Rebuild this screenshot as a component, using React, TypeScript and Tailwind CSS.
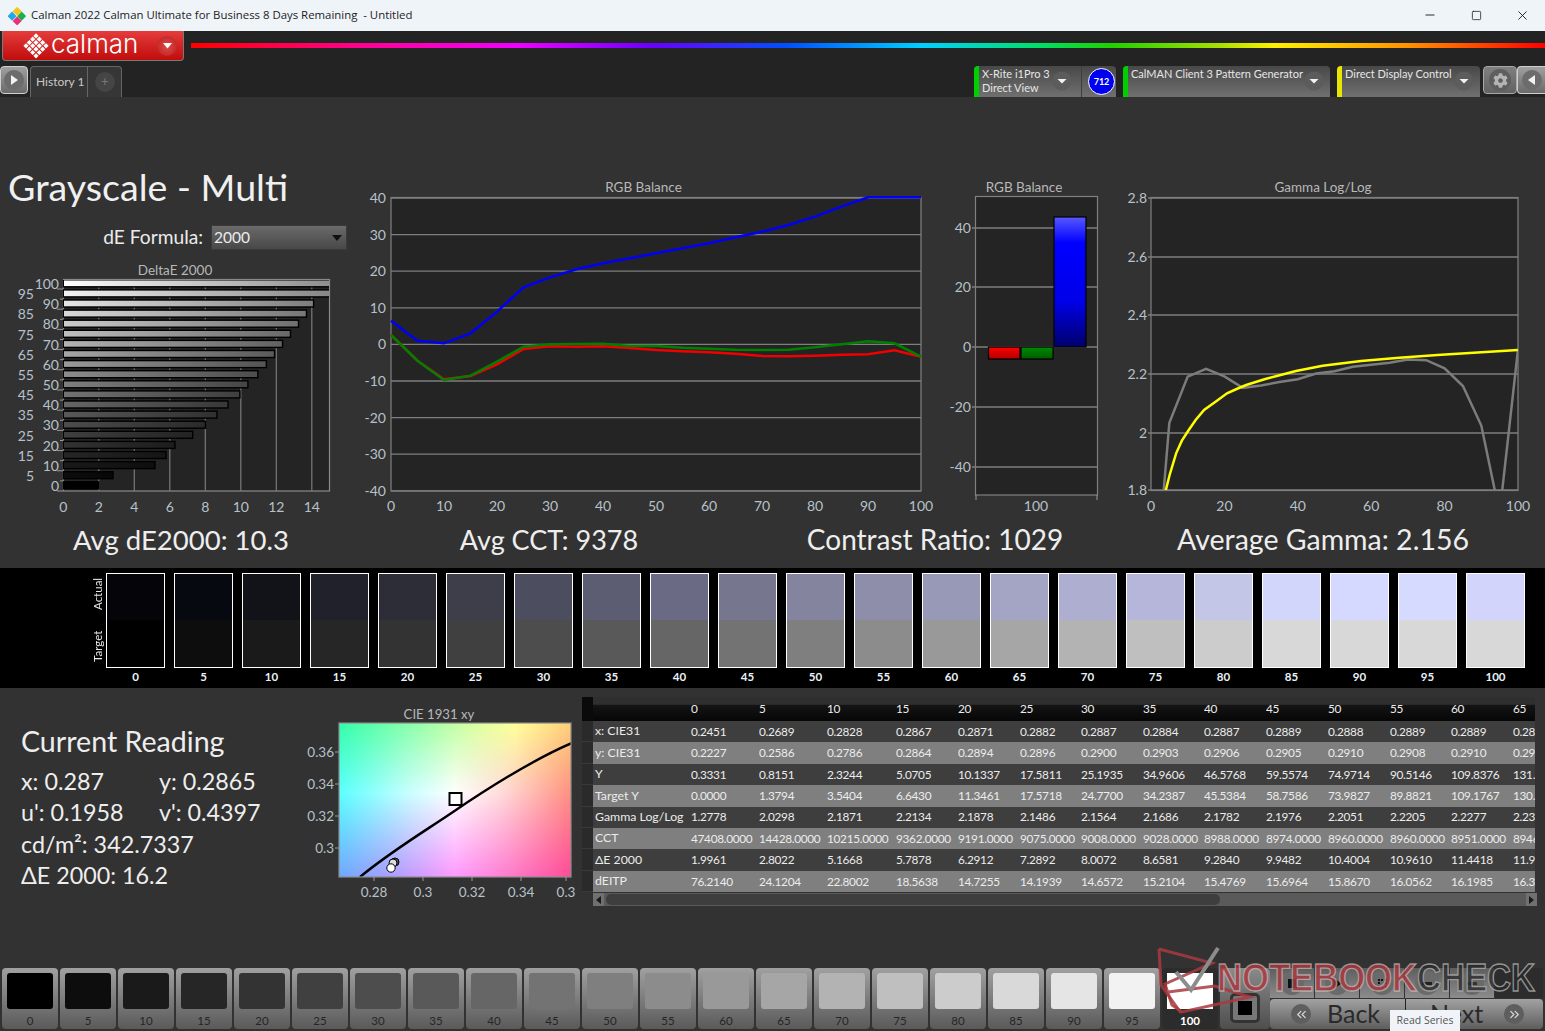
import { ChevronsLeft, ChevronsRight, Minus, Square, X } from 'lucide-react';
import { FaCog } from 'react-icons/fa';

const levels = Array.from({ length: 21 }, (_, i) => i * 5);
const gray = (v: number) => `rgb(${v},${v},${v})`;

const actualColors = [
  '#040409', '#070910', '#111318', '#20212a', '#2d2d38', '#3e3e4b', '#4d4d60', '#5c5c72', '#6a6a84', '#76768f', '#84849e',
  '#8e8eaa', '#9898b7', '#a4a4c4', '#aeaed0', '#b6b6da', '#c4c6e8', '#d2d6fa', '#d5d9ff', '#d6dafe', '#d3d4fb',
];

const deltaE = [
  1.9961, 2.8022, 5.1668, 5.7878, 6.2912, 7.2892, 8.0072, 8.6581, 9.284, 9.9482, 10.4004, 10.961, 11.4418, 11.9, 12.35, 12.8,
  13.25, 13.7, 14.1, 15.3, 15.3,
];

const tableHead = ['', '0', '5', '10', '15', '20', '25', '30', '35', '40', '45', '50', '55', '60', '65'];
const tableRows = [
  ['x: CIE31', '0.2451', '0.2689', '0.2828', '0.2867', '0.2871', '0.2882', '0.2887', '0.2884', '0.2887', '0.2889', '0.2888', '0.2889', '0.2889', '0.2889'],
  ['y: CIE31', '0.2227', '0.2586', '0.2786', '0.2864', '0.2894', '0.2896', '0.2900', '0.2903', '0.2906', '0.2905', '0.2910', '0.2908', '0.2910', '0.2911'],
  ['Y', '0.3331', '0.8151', '2.3244', '5.0705', '10.1337', '17.5811', '25.1935', '34.9606', '46.5768', '59.5574', '74.9714', '90.5146', '109.8376', '131.2044'],
  ['Target Y', '0.0000', '1.3794', '3.5404', '6.6430', '11.3461', '17.5718', '24.7700', '34.2387', '45.5384', '58.7586', '73.9827', '89.8821', '109.1767', '130.5511'],
  ['Gamma Log/Log', '1.2778', '2.0298', '2.1871', '2.2134', '2.1878', '2.1486', '2.1564', '2.1686', '2.1782', '2.1976', '2.2051', '2.2205', '2.2277', '2.2341'],
  ['CCT', '47408.0000', '14428.0000', '10215.0000', '9362.0000', '9191.0000', '9075.0000', '9008.0000', '9028.0000', '8988.0000', '8974.0000', '8960.0000', '8960.0000', '8951.0000', '8946.0000'],
  ['ΔE 2000', '1.9961', '2.8022', '5.1668', '5.7878', '6.2912', '7.2892', '8.0072', '8.6581', '9.2840', '9.9482', '10.4004', '10.9610', '11.4418', '11.9083'],
  ['dEITP', '76.2140', '24.1204', '22.8002', '18.5638', '14.7255', '14.1939', '14.6572', '15.2104', '15.4769', '15.6964', '15.8670', '16.0562', '16.1985', '16.3225'],
];
const tableGrid = 'grid grid-cols-[98px_68px_68px_69px_62px_62px_61px_62px_61px_62px_62px_62px_61px_62px_22px]';

const labelFill = '#b7c1ca';
const titleSize = 13.5;

function DropCircle({ size = 20 }: { size?: number }) {
  return (
    <svg width={size} height={size} viewBox="0 0 20 20" className="shrink-0">
      <circle cx="10" cy="10" r="9.5" fill="#5c5c5c" />
      <path d="M5.5 8 H14.5 L10 12.5 Z" fill="#f4f4f4" />
    </svg>
  );
}

function DeviceWidget({ color, width, lines, badge }: { color: string; width: string; lines: string[]; badge?: boolean }) {
  return (
    <div className={`${width} h-[31px] flex rounded-t-[4px] overflow-hidden bg-[linear-gradient(#484848,#707070)]`}>
      <div className={`w-[5px] shrink-0 ${color}`} />
      <div className="flex-1 pl-[3px] pt-px text-[11px] leading-[14px] text-[#e6e6e6] whitespace-nowrap">
        {lines.map((l) => (
          <div key={l}>{l}</div>
        ))}
      </div>
      <div className={`pt-[5px] ${badge ? 'pr-[9px]' : 'pr-[6px]'}`}>
        <DropCircle />
      </div>
      {badge && (
        <div className="w-[35px] shrink-0 border-l border-[#3e3e3e] flex items-center justify-end pr-px">
          <div className="w-[27px] h-[27px] rounded-full bg-[#0000f0] border border-white flex items-center justify-center text-[9px] font-bold text-white">
            712
          </div>
        </div>
      )}
    </div>
  );
}

function TitleBar() {
  return (
    <div className="h-[31px] bg-[#eff4f9] flex items-center shrink-0">
      <svg width="18" height="18" viewBox="0 0 18 18" className="ml-[8px]">
        <rect x="6" y="1" width="6.4" height="6.4" transform="rotate(45 9 4.2)" fill="#f5c518" />
        <rect x="1" y="6" width="6.4" height="6.4" transform="rotate(45 4.2 9)" fill="#22a7e8" />
        <rect x="10.6" y="6" width="6.4" height="6.4" transform="rotate(45 13.8 9)" fill="#1fae4b" />
        <rect x="6" y="10.6" width="6.4" height="6.4" transform="rotate(45 9 13.8)" fill="#ec2f7b" />
      </svg>
      <span className="ml-[5px] -mt-px font-['Open_Sans',sans-serif] text-[11.4px] text-[#1c1c1c] whitespace-pre">
        Calman 2022 Calman Ultimate for Business 8 Days Remaining  - Untitled
      </span>
      <div className="ml-auto flex text-[#111]">
        <div className="w-[46px] flex justify-center"><Minus size={14} strokeWidth={1.5} /></div>
        <div className="w-[46px] flex justify-center"><Square size={11} strokeWidth={1.6} className="my-[1.5px]" /></div>
        <div className="w-[46px] flex justify-center"><X size={15} strokeWidth={1.4} /></div>
      </div>
    </div>
  );
}

function Logo() {
  const cells = [0, 1, 2, 3].flatMap((a) => [0, 1, 2, 3].map((b) => [a, b]));
  return (
    <div className="w-[182px] h-[30px] rounded-b-[4px] border border-t-0 border-[#7a7a7a] bg-[linear-gradient(#e63c3c,#c00c0c)] flex items-center">
      <svg width="26" height="26" viewBox="-13 -13 26 26" className="ml-[20px]">
        <g transform="rotate(45)">
          {cells.map(([a, b]) => (
            <rect key={`${a}${b}`} x={-9 + a * 4.7} y={-9 + b * 4.7} width="3.7" height="3.7" fill="#fff" />
          ))}
        </g>
      </svg>
      <span className="ml-[2px] font-['Inter',sans-serif] font-light text-[26px] leading-[30px] text-white -mt-[3px]">calman</span>
      <div className="ml-auto mr-[6px] w-[20px] h-[20px] rounded-full bg-[radial-gradient(#e04a4a,#b81c1c)] flex items-center justify-center">
        <svg width="9" height="6" viewBox="0 0 9 6"><path d="M0 0 H9 L4.5 5.5 Z" fill="#fff" /></svg>
      </div>
    </div>
  );
}

function Toolbar() {
  return (
    <div className="h-[66px] bg-[#232323] shrink-0 flex flex-col">
      <div className="h-[35px] pl-[2px] flex items-start">
        <Logo />
        <div className="ml-[7px] mt-[12px] h-[5px] flex-1 bg-[linear-gradient(90deg,#ff0000_0%,#ff00a0_14%,#f000ff_24%,#6a00ff_34%,#0050ff_44%,#00d0ff_54%,#00e060_63%,#20d000_68%,#a8e000_76%,#fff000_80%,#ff9000_90%,#ff0000_100%)]" />
      </div>
      <div className="h-[31px] flex">
        <div className="w-[28px] h-[28px] rounded-[4px] border border-[#cfcfcf] bg-[linear-gradient(#a0a0a0,#6a6a6a)] flex items-center justify-center">
          <div className="w-[20px] h-[20px] rounded-full bg-[#6c6c6c] flex items-center justify-center">
            <svg width="7" height="10" viewBox="0 0 7 10"><path d="M0 0 L7 5 L0 10 Z" fill="#f2f2f2" /></svg>
          </div>
        </div>
        <div className="ml-[2px] w-[92px] h-[31px] rounded-t-[4px] border border-b-0 border-[#666] bg-[#363636] flex items-center text-[12px] text-[#c8c8c8]">
          <span className="w-[57px] pl-[5px] whitespace-nowrap">History 1</span>
          <div className="w-[34px] h-full border-l border-[#666] flex items-center justify-center">
            <div className="w-[20px] h-[20px] rounded-full bg-[#454545] flex items-center justify-center text-[13px] text-[#777]">+</div>
          </div>
        </div>
        <div className="ml-auto flex">
          <DeviceWidget color="bg-[#00d000]" width="w-[142px]" lines={['X-Rite i1Pro 3', 'Direct View']} badge />
          <div className="w-[7px]" />
          <DeviceWidget color="bg-[#00d000]" width="w-[207px]" lines={['CalMAN Client 3 Pattern Generator']} />
          <div className="w-[7px]" />
          <DeviceWidget color="bg-[#e6e600]" width="w-[143px]" lines={['Direct Display Control']} />
          <div className="w-[3px]" />
          <div className="w-[34px] h-[28px] rounded-[4px] border border-[#a8a8a8] bg-[linear-gradient(#808080,#626262)] flex items-center justify-center">
            <div className="w-[22px] h-[22px] rounded-full bg-[#5e5e5e] flex items-center justify-center">
              <FaCog size={15} className="text-[#b4b4b4]" />
            </div>
          </div>
          <div className="w-[28px] h-[28px] rounded-l-[4px] border border-r-0 border-[#cfcfcf] bg-[linear-gradient(#a0a0a0,#6a6a6a)] flex items-center justify-center">
            <div className="w-[20px] h-[20px] rounded-full bg-[#6c6c6c] flex items-center justify-center">
              <svg width="7" height="10" viewBox="0 0 7 10"><path d="M7 0 L0 5 L7 10 Z" fill="#f2f2f2" /></svg>
            </div>
          </div>
        </div>
      </div>
    </div>
  );
}

function DeltaEChart() {
  const x0 = 63.3;
  const sx = 17.75;
  return (
    <svg width="362" height="262" viewBox="0 258 362 262">
      <defs>
        {levels.map((v, i) => {
          const c = Math.round(v * 2.55);
          return (
            <linearGradient key={v} id={`de${i}`} x1="0" x2="1" y1="0" y2="0">
              <stop offset="0" stopColor={gray(c)} />
              <stop offset="1" stopColor={gray(Math.round(c * 0.55))} />
            </linearGradient>
          );
        })}
        <clipPath id="deClip"><rect x="63" y="279" width="266" height="211" /></clipPath>
      </defs>
      <text x="175" y="274" textAnchor="middle" fontSize={titleSize} fill="#b8b8b8">DeltaE 2000</text>
      <rect x="63.5" y="278.5" width="266" height="211.5" fill="#242424" stroke="#8a8a8a" strokeWidth="1.2" />
      {[2, 4, 6, 8, 10, 12, 14].map((t) => (
        <line key={t} x1={x0 + t * sx} x2={x0 + t * sx} y1="279" y2="490" stroke="#7a7a7a" strokeWidth="1.2" />
      ))}
      <g clipPath="url(#deClip)">
        {levels.map((v, i) => (
          <rect
            key={v}
            x={x0}
            y={484.3 - i * 10.1 - 3.5}
            width={deltaE[i] * sx}
            height="7"
            fill={`url(#de${i})`}
            stroke="#000"
            strokeWidth="1.4"
          />
        ))}
      </g>
      {levels.map((v, i) => (
        <g key={v}>
          <text x={i % 2 === 0 ? 59 : 34} y={490 - i * 10.1} textAnchor="end" fontSize="14" fill={labelFill}>{v}</text>
          <line x1={i % 2 === 0 ? 57 : 60} x2="63" y1={490 - i * 10.1} y2={490 - i * 10.1} stroke="#9a9a9a" />
        </g>
      ))}
      {[0, 2, 4, 6, 8, 10, 12, 14].map((t) => (
        <text key={t} x={x0 + t * sx} y="511" textAnchor="middle" fontSize="14" fill={labelFill}>{t}</text>
      ))}
    </svg>
  );
}

function BalanceChart() {
  const toY = (z: number) => 190 + z / 3;
  const line = (zs: number[], step: number) => zs.map((z, i) => `${391 + i * step},${toY(z)}`).join(' ');
  const blue = [392, 452, 460, 430, 365, 292, 262, 238, 220, 205, 190, 175, 160, 142, 125, 105, 80, 50, 22];
  const green = [435, 512, 570, 557, 515, 470, 463, 462, 461, 468, 468, 473, 476, 479, 480, 479, 472, 463, 454, 460, 500];
  const red = [435, 512, 568, 558, 523, 477, 469, 470, 469, 474, 480, 484, 487, 491, 498, 499, 497, 494, 493, 481, 500];
  const yTicks = [40, 30, 20, 10, 0, -10, -20, -30, -40];
  return (
    <svg width="572" height="423" viewBox="362 97 572 423">
      <text x="643.5" y="192" textAnchor="middle" fontSize={titleSize} fill="#b8b8b8">RGB Balance</text>
      <rect x="391" y="197.5" width="530" height="293.5" fill="#242424" stroke="#808080" strokeWidth="1.2" />
      {yTicks.map((t, i) => {
        const y = 198 + i * 36.6;
        return (
          <g key={t}>
            <line x1="391" x2="921" y1={y} y2={y} stroke="#7e7e7e" strokeWidth="1.3" />
            <text x="386" y={y + 5} textAnchor="end" fontSize="14" fill={labelFill}>{t}</text>
          </g>
        );
      })}
      <polyline points={`${line(blue, 26.5)} 921,${toY(22)}`} fill="none" stroke="#0000f5" strokeWidth="2.5" />
      <polyline points={line(red, 26.5)} fill="none" stroke="#f00000" strokeWidth="2.5" />
      <polyline points={line(green, 26.5)} fill="none" stroke="#008000" strokeWidth="2.5" />
      {[0, 10, 20, 30, 40, 50, 60, 70, 80, 90, 100].map((t) => (
        <text key={t} x={391 + t * 5.3} y="511" textAnchor="middle" fontSize="14" fill={labelFill}>{t}</text>
      ))}
    </svg>
  );
}

function BarChart() {
  const ticks: [number, number][] = [[40, 228], [20, 287], [0, 347], [-20, 407], [-40, 467]];
  return (
    <svg width="176" height="423" viewBox="934 97 176 423">
      <defs>
        <linearGradient id="barB" x1="0" x2="0" y1="0" y2="1">
          <stop offset="0" stopColor="#5858ff" />
          <stop offset="0.2" stopColor="#0000ff" />
          <stop offset="0.65" stopColor="#0000e8" />
          <stop offset="1" stopColor="#00006a" />
        </linearGradient>
        <linearGradient id="barR" x1="0" x2="0" y1="0" y2="1">
          <stop offset="0" stopColor="#ff0000" />
          <stop offset="1" stopColor="#b00000" />
        </linearGradient>
        <linearGradient id="barG" x1="0" x2="0" y1="0" y2="1">
          <stop offset="0" stopColor="#008a00" />
          <stop offset="1" stopColor="#005c00" />
        </linearGradient>
      </defs>
      <text x="1024" y="192" textAnchor="middle" fontSize={titleSize} fill="#b8b8b8">RGB Balance</text>
      <rect x="975.5" y="196.5" width="122" height="298.5" fill="#242424" stroke="#808080" strokeWidth="1.2" />
      {ticks.map(([t, y]) => (
        <g key={t}>
          <line x1="972" x2="1097" y1={y} y2={y} stroke="#7e7e7e" strokeWidth="1.3" />
          <text x="971" y={y + 5} textAnchor="end" fontSize="14" fill={labelFill}>{t}</text>
        </g>
      ))}
      <rect x="988.5" y="347" width="31.5" height="12" fill="url(#barR)" stroke="#000" strokeWidth="1.2" />
      <rect x="1021" y="347" width="32" height="12" fill="url(#barG)" stroke="#000" strokeWidth="1.2" />
      <rect x="1054" y="217" width="32" height="130" fill="url(#barB)" stroke="#000" strokeWidth="1.2" />
      <line x1="976" x2="976" y1="495" y2="500" stroke="#9a9a9a" />
      <line x1="1097" x2="1097" y1="495" y2="500" stroke="#9a9a9a" />
      <text x="1036" y="511" textAnchor="middle" fontSize="14" fill={labelFill}>100</text>
    </svg>
  );
}

function GammaChart() {
  const toX = (v: number) => 1151 + v * 3.67;
  const toY = (g: number) => 490 - (g - 1.8) * 293;
  const measured = [
    1.2778, 2.0298, 2.1871, 2.2134, 2.1878, 2.1486, 2.1564, 2.1686, 2.1782, 2.1976, 2.2051, 2.2205, 2.2277, 2.2341, 2.245, 2.243, 2.215,
    2.155, 2.02, 1.72, 2.28,
  ];
  const gray2 = measured.map((g, i) => `${toX(i * 5)},${toY(g)}`).join(' ');
  const yellowZ = [
    [590, 946], [600, 900], [617, 835], [632, 797], [650, 765], [668, 735], [690, 705], [720, 680], [750, 655], [775, 642], [800, 630],
    [850, 612], [890, 600], [930, 588], [1000, 572], [1100, 558], [1200, 548], [1300, 540], [1510, 525],
  ];
  const yellow = yellowZ.map(([x, y]) => `${940 + x / 2.613},${175 + y / 3}`).join(' ');
  const yTicks: [string, number][] = [['2.8', 198], ['2.6', 257], ['2.4', 315], ['2.2', 374], ['2', 433], ['1.8', 490]];
  return (
    <svg width="435" height="423" viewBox="1110 97 435 423">
      <defs>
        <clipPath id="gammaClip"><rect x="1151" y="197" width="367" height="293" /></clipPath>
      </defs>
      <text x="1323" y="192" textAnchor="middle" fontSize={titleSize} fill="#b8b8b8">Gamma Log/Log</text>
      <rect x="1151" y="197.5" width="367" height="293" fill="#242424" stroke="#808080" strokeWidth="1.2" />
      {yTicks.map(([t, y]) => (
        <g key={t}>
          <line x1="1148" x2="1518" y1={y} y2={y} stroke="#7e7e7e" strokeWidth="1.3" />
          <text x="1147" y={y + 5} textAnchor="end" fontSize="14" fill={labelFill}>{t}</text>
        </g>
      ))}
      <g clipPath="url(#gammaClip)">
        <polyline points={gray2} fill="none" stroke="#7c7c7c" strokeWidth="2.5" />
        <polyline points={yellow} fill="none" stroke="#ffff00" strokeWidth="2.5" />
      </g>
      {[0, 20, 40, 60, 80, 100].map((t) => (
        <text key={t} x={toX(t)} y="511" textAnchor="middle" fontSize="14" fill={labelFill}>{t}</text>
      ))}
    </svg>
  );
}

function ChartsSection() {
  return (
    <div className="h-[423px] flex shrink-0">
      <div className="w-[362px] shrink-0 flex flex-col">
        <h1 className="mt-[68px] ml-[8px] h-[44px] text-[37.6px] leading-[44px] text-[#f0f0f0] font-normal whitespace-nowrap">Grayscale - Multi</h1>
        <div className="mt-[16px] h-[25px] flex items-center">
          <div className="w-[203px] -mt-px text-right text-[19.2px] text-[#ececec]">dE Formula:</div>
          <div className="ml-[8px] w-[136px] h-[25px] border border-[#3a3a3a] bg-[linear-gradient(#6a6a6a,#484848)] flex items-center pl-[2px] pr-[4px] text-[15.5px] text-[#ececec]">
            2000
            <svg width="10" height="6" viewBox="0 0 10 6" className="ml-auto"><path d="M0 0 H10 L5 6 Z" fill="#101010" /></svg>
          </div>
        </div>
        <div className="mt-[9px]"><DeltaEChart /></div>
      </div>
      <BalanceChart />
      <BarChart />
      <GammaChart />
    </div>
  );
}

function StatsRow() {
  return (
    <div className="h-[48px] shrink-0 grid grid-cols-[362px_374px_398px_378px] items-baseline text-center text-[#eeeeee] whitespace-nowrap">
      <div className="text-[27.5px] leading-[38px]">Avg dE2000: 10.3</div>
      <div className="text-[27px] leading-[38px]">Avg CCT: 9378</div>
      <div className="text-[28px] leading-[38px]">Contrast Ratio: 1029</div>
      <div className="text-[28.5px] leading-[38px]">Average Gamma: 2.156</div>
    </div>
  );
}

function SwatchStrip() {
  return (
    <div className="h-[120px] bg-black shrink-0 flex pt-[5px]">
      <div className="w-[92px] shrink-0" />
      <div className="w-[14px] h-[95px] shrink-0 flex flex-col text-[11.5px] leading-[12px] text-[#e6e6e6]">
        <div className="h-[37px] w-[12px] [writing-mode:vertical-rl] rotate-180">Actual</div>
        <div className="mt-[15px] h-[37px] w-[12px] [writing-mode:vertical-rl] rotate-180">Target</div>
      </div>
      <div className="flex gap-[9px]">
        {levels.map((v, i) => (
          <div key={v} className="w-[59px]">
            <div className="h-[95px] border border-white flex flex-col">
              <div className="h-[46px]" style={{ background: actualColors[i] }} />
              <div className="flex-1" style={{ background: gray(Math.min(Math.round(v * 2.55), 216)) }} />
            </div>
            <div className="mt-[2px] text-center text-[11.5px] font-bold leading-[14px] text-[#eaf2f8]">{v}</div>
          </div>
        ))}
      </div>
    </div>
  );
}

function CurrentReading() {
  return (
    <div className="w-[300px] shrink-0 pl-[21px] pt-[33px] text-[#eeeeee]">
      <div className="text-[28.6px] leading-[40px]">Current Reading</div>
      <div className="mt-[5px] grid grid-cols-[138px_1fr] text-[23.3px] leading-[31.4px] whitespace-nowrap">
        <div>x: 0.287</div>
        <div>y: 0.2865</div>
        <div>u': 0.1958</div>
        <div>v': 0.4397</div>
        <div className="col-span-2">cd/m²: 342.7337</div>
        <div className="col-span-2">ΔE 2000: 16.2</div>
      </div>
    </div>
  );
}

function CieChart() {
  return (
    <svg width="282" height="277" viewBox="300 688 282 277" className="shrink-0">
      <defs>
        <linearGradient id="cieTop">
          <stop offset="0" stopColor="#33ffa8" />
          <stop offset="0.3" stopColor="#88ffaa" />
          <stop offset="0.6" stopColor="#ddffa0" />
          <stop offset="0.76" stopColor="#ffff99" />
          <stop offset="1" stopColor="#ffcf78" />
        </linearGradient>
        <linearGradient id="cieMid">
          <stop offset="0" stopColor="#5cffff" />
          <stop offset="0.3" stopColor="#c8ffff" />
          <stop offset="0.5" stopColor="#ffffff" />
          <stop offset="0.7" stopColor="#ffdcdc" />
          <stop offset="1" stopColor="#ff9080" />
        </linearGradient>
        <linearGradient id="cieBot">
          <stop offset="0" stopColor="#6ea8ff" />
          <stop offset="0.25" stopColor="#b39cff" />
          <stop offset="0.5" stopColor="#ff99ff" />
          <stop offset="0.75" stopColor="#ff78c8" />
          <stop offset="1" stopColor="#ff4a98" />
        </linearGradient>
        <linearGradient id="fadeDown" x1="0" x2="0" y1="0" y2="1">
          <stop offset="0" stopColor="#fff" />
          <stop offset="1" stopColor="#000" />
        </linearGradient>
        <linearGradient id="fadeUp" x1="0" x2="0" y1="1" y2="0">
          <stop offset="0" stopColor="#fff" />
          <stop offset="1" stopColor="#000" />
        </linearGradient>
        <mask id="maskTop" maskUnits="userSpaceOnUse" x="339" y="723" width="232" height="154">
          <rect x="339" y="723" width="232" height="70" fill="url(#fadeDown)" />
        </mask>
        <mask id="maskBot" maskUnits="userSpaceOnUse" x="339" y="723" width="232" height="154">
          <rect x="339" y="793" width="232" height="84" fill="url(#fadeUp)" />
        </mask>
        <clipPath id="cieClip"><rect x="339" y="723" width="232" height="154" /></clipPath>
      </defs>
      <text x="439" y="719" textAnchor="middle" fontSize="13.2" fill="#b8b8b8">CIE 1931 xy</text>
      <rect x="339" y="723" width="232" height="154" fill="url(#cieMid)" />
      <rect x="339" y="723" width="232" height="154" fill="url(#cieTop)" mask="url(#maskTop)" />
      <rect x="339" y="723" width="232" height="154" fill="url(#cieBot)" mask="url(#maskBot)" />
      <g clipPath="url(#cieClip)">
        <path d="M360 877 C390 852 425 831 453 812 S530 761 572 743" fill="none" stroke="#000" strokeWidth="2.4" />
        <rect x="449.5" y="793" width="12" height="12" fill="#fff" stroke="#000" strokeWidth="2" />
        <circle cx="395" cy="862" r="4" fill="#555" stroke="#000" />
        <circle cx="393" cy="863" r="4" fill="#ddd" stroke="#000" />
        <circle cx="391" cy="868" r="4.2" fill="#fff" stroke="#000" />
      </g>
      <rect x="339" y="723" width="232" height="154" fill="none" stroke="#8a8a8a" strokeWidth="1.2" />
      {([['0.36', 752], ['0.34', 784], ['0.32', 816], ['0.3', 848]] as [string, number][]).map(([t, y]) => (
        <g key={t}>
          <text x="334" y={y + 5} textAnchor="end" fontSize="13.5" fill={labelFill}>{t}</text>
          <line x1="335" x2="339" y1={y} y2={y} stroke="#9a9a9a" />
        </g>
      ))}
      {([['0.28', 374], ['0.3', 423], ['0.32', 472], ['0.34', 521], ['0.3', 566]] as [string, number][]).map(([t, x]) => (
        <g key={x}>
          <text x={x} y="897" textAnchor="middle" fontSize="13.5" fill={labelFill}>{t}</text>
          <line x1={x} x2={x} y1="877" y2="881" stroke="#9a9a9a" />
        </g>
      ))}
    </svg>
  );
}

function DataTable() {
  return (
    <div className="w-[955px] pt-[9px] text-[11.8px] tracking-[-0.3px] text-[#ececec]">
      <div className="flex h-[24px]">
        <div className="w-[11px] bg-[#0a0a0a]" />
        <div className={`${tableGrid} items-center bg-[linear-gradient(#2f2f2f_0%,#2f2f2f_30%,#141414_35%,#060606_100%)]`}>
          {tableHead.map((h, i) => (
            <div key={i} className="overflow-hidden">{h}</div>
          ))}
        </div>
      </div>
      {tableRows.map((row, r) => (
        <div key={row[0]} className="flex h-[21.4px]">
          <div className="w-[11px] bg-[#2a2a2a] border-b border-[#3a3a3a]" />
          <div className={`${tableGrid} items-center ${r % 2 === 0 ? 'bg-[#3e3e3e]' : 'bg-[#7f7f7f]'}`}>
            {row.map((c, i) => (
              <div key={i} className={`overflow-hidden whitespace-nowrap ${i === 0 ? 'pl-[2px] text-[12.3px] tracking-normal' : ''}`}>{c}</div>
            ))}
          </div>
        </div>
      ))}
      <div className="ml-[11px] mt-px w-[944px] h-[13px] bg-[#5a5a5a] flex items-center">
        <div className="w-[11px] h-[13px] bg-[#707070] flex items-center justify-center">
          <svg width="5" height="8" viewBox="0 0 5 8"><path d="M5 0 L0 4 L5 8 Z" fill="#1a1a1a" /></svg>
        </div>
        <div className="ml-[2px] w-[614px] h-[11px] rounded-[5px] bg-[#3e3e3e]" />
        <div className="ml-auto w-[11px] h-[13px] bg-[#707070] flex items-center justify-center">
          <svg width="5" height="8" viewBox="0 0 5 8"><path d="M0 0 L5 4 L0 8 Z" fill="#1a1a1a" /></svg>
        </div>
      </div>
    </div>
  );
}

function BottomStrip() {
  const small = [
    <div key="a" className="w-[9px] h-[9px] bg-[#111]" />,
    <svg key="b" width="9" height="11" viewBox="0 0 9 11"><path d="M0 0 L9 5.5 L0 11 Z" fill="#111" /></svg>,
    <div key="c" className="w-[9px] h-[9px] border-2 border-dotted border-[#111]" />,
    <div key="d" className="w-[10px] h-[3px] bg-[#222]" />,
    <div key="e" className="w-[10px] h-[3px] bg-[#333]" />,
  ];
  return (
    <div className="flex-1 flex pl-[2px] pt-[2px]">
      <div className="flex">
        {levels.slice(0, 20).map((v) => (
          <div key={v} className="w-[56px] mr-[2px] h-[61px] rounded-[4px] bg-[linear-gradient(#a0a0a0,#5a5a5a)] px-[5px] pt-[5px]">
            <div className="h-[36px] rounded-[3px]" style={{ background: gray(Math.round(v * 2.55)) }} />
            <div className="mt-[5px] text-center text-[11.5px] leading-[14px] text-[#262626]">{v}</div>
          </div>
        ))}
        <div className="w-[56px] mr-[2px] h-[61px] rounded-[4px] bg-[#2c2c2c] px-[5px] pt-[5px]">
          <div className="h-[36px] bg-white" />
          <div className="mt-[5px] text-center text-[11.5px] leading-[14px] font-bold text-white">100</div>
        </div>
      </div>
      <div className="w-[50px] h-[61px] rounded-[4px] bg-[linear-gradient(#8a8a8a,#4e4e4e)] flex items-end justify-center pb-[6px]">
        <div className="w-[30px] h-[30px] rounded-[5px] border-[3px] border-[#333] bg-[#777] flex items-center justify-center">
          <div className="w-[14px] h-[14px] bg-black" />
        </div>
      </div>
      <div className="w-[273px] flex flex-col">
        <div className="h-[30px] flex">
          {small.map((icon, i) => (
            <div key={i} className="w-[45px] border-r border-[#333] bg-[linear-gradient(#5e5e5e,#8c8c8c)] flex items-center justify-center">
              <div className="w-[24px] h-[24px] rounded-full bg-[#6a6a6a] flex items-center justify-center">{icon}</div>
            </div>
          ))}
          <div className="flex-1 bg-[#2c2c2c]" />
        </div>
        <div className="h-[31px] rounded-[4px] border-t border-[#333] flex bg-[linear-gradient(#a2a2a2,#5e5e5e)] text-[25px] text-[#2a2a2a]">
          <div className="w-[136px] border-r border-[#222] flex items-center pl-[21px]">
            <div className="w-[20px] h-[20px] rounded-full bg-[#5e5e5e] flex items-center justify-center">
              <ChevronsLeft size={15} className="text-[#d6d6d6]" />
            </div>
            <span className="ml-[16px]">Back</span>
          </div>
          <div className="flex-1 flex items-center pl-[24px]">
            <span>Next</span>
            <div className="ml-auto mr-[19px] w-[20px] h-[20px] rounded-full bg-[#5e5e5e] flex items-center justify-center">
              <ChevronsRight size={15} className="text-[#d6d6d6]" />
            </div>
          </div>
        </div>
      </div>
    </div>
  );
}

function Watermark() {
  return (
    <svg className="absolute left-[1150px] top-[940px] pointer-events-none" width="395" height="91" viewBox="1150 940 395 91">
      <path d="M1159 949 L1212 963 L1165 984 L1172 1005 L1182 1012 L1250 997 L1215 986 L1168 992" fill="none" stroke="#a83a40" strokeWidth="3" opacity="0.85" />
      <path d="M1159 949 L1161 985 L1181 1013" fill="none" stroke="#a83a40" strokeWidth="3" opacity="0.85" />
      <path d="M1176 972 L1191 990 L1218 948" fill="none" stroke="#8c8c8c" strokeWidth="4" />
      <text x="1217" y="991" fontSize="38" fontWeight="700" textLength="200" lengthAdjust="spacingAndGlyphs" fill="#a83a40" fillOpacity="0.85" stroke="#cfcfcf" strokeOpacity="0.6" strokeWidth="1.4" className="font-['Liberation_Sans',sans-serif]">NOTEBOOK</text>
      <text x="1417" y="991" fontSize="38" fontWeight="700" textLength="118" lengthAdjust="spacingAndGlyphs" fill="#2a2a2a" fillOpacity="0.75" stroke="#a8a8a8" strokeOpacity="0.85" strokeWidth="1.4" className="font-['Liberation_Sans',sans-serif]">CHECK</text>
    </svg>
  );
}

export default function App() {
  return (
    <div className="relative w-[1545px] h-[1031px] overflow-hidden bg-[#323232] flex flex-col font-['Lato',sans-serif]">
      <TitleBar />
      <Toolbar />
      <ChartsSection />
      <StatsRow />
      <SwatchStrip />
      <div className="h-[278px] flex shrink-0">
        <CurrentReading />
        <CieChart />
        <DataTable />
      </div>
      <BottomStrip />
      <Watermark />
      <div className="absolute left-[1390px] top-[1010px] w-[70px] h-[21px] bg-[#f0f4f9] flex items-center justify-center font-['Open_Sans',sans-serif] text-[10.5px] text-[#555]">
        Read Series
      </div>
    </div>
  );
}
